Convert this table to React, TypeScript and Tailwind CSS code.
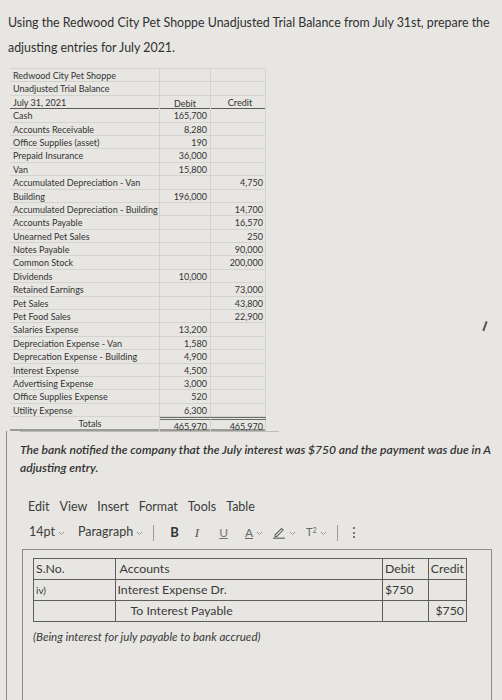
import React from "react";

type Row = { label: string; debit?: string; credit?: string; kind?: "title" | "head" | "total" };

const rows: Row[] = [
  { label: "Redwood City Pet Shoppe", kind: "title" },
  { label: "Unadjusted Trial Balance", kind: "title" },
  { label: "July 31, 2021", debit: "Debit", credit: "Credit", kind: "head" },
  { label: "Cash", debit: "165,700" },
  { label: "Accounts Receivable", debit: "8,280" },
  { label: "Office Supplies (asset)", debit: "190" },
  { label: "Prepaid Insurance", debit: "36,000" },
  { label: "Van", debit: "15,800" },
  { label: "Accumulated Depreciation - Van", credit: "4,750" },
  { label: "Building", debit: "196,000" },
  { label: "Accumulated Depreciation - Building", credit: "14,700" },
  { label: "Accounts Payable", credit: "16,570" },
  { label: "Unearned Pet Sales", credit: "250" },
  { label: "Notes Payable", credit: "90,000" },
  { label: "Common Stock", credit: "200,000" },
  { label: "Dividends", debit: "10,000" },
  { label: "Retained Earnings", credit: "73,000" },
  { label: "Pet Sales", credit: "43,800" },
  { label: "Pet Food Sales", credit: "22,900" },
  { label: "Salaries Expense", debit: "13,200" },
  { label: "Depreciation Expense - Van", debit: "1,580" },
  { label: "Deprecation Expense - Building", debit: "4,900" },
  { label: "Interest Expense", debit: "4,500" },
  { label: "Advertising Expense", debit: "3,000" },
  { label: "Office Supplies Expense", debit: "520" },
  { label: "Utility Expense", debit: "6,300" },
  { label: "Totals", debit: "465,970", credit: "465,970", kind: "total" },
];

function TrialBalance() {
  return (
    <div className="ml-[10px] mt-[8px] w-[256px] border-t border-r border-[#d4d4cf] font-['Lato'] text-[9px] text-[#333]">
      {rows.map((r, i) => {
        const head = r.kind === "head";
        const total = r.kind === "total";
        return (
          <div
            key={i}
            className={
              "grid grid-cols-[150px_51px_55px] h-[13.4px] leading-[13px] " +
              (head ? "border-b border-[#5a5a5a]" : total ? "border-b-2 border-[#9a9a96]" : "border-b border-[#d4d4cf]")
            }
          >
            <div className={"px-[3px] whitespace-nowrap overflow-hidden border-r border-[#d4d4cf] " + (total ? "text-center pl-[14px]" : "")}>
              {r.label}
            </div>
            <div
              className={
                "px-[3px] border-r border-[#d4d4cf] " +
                (head ? "text-center pt-[1px]" : "text-right") +
                (total ? " border-t-[3px] border-double border-t-[#6a6a6a]" : "")
              }
            >
              {r.debit}
            </div>
            <div
              className={
                "px-[3px] " +
                (head ? "text-center pl-[6px]" : "text-right") +
                (total ? " border-t-[3px] border-double border-t-[#6a6a6a]" : "")
              }
            >
              {r.credit}
            </div>
          </div>
        );
      })}
    </div>
  );
}

function Chevron() {
  return (
    <svg width="7" height="5" viewBox="0 0 7 5" className="ml-[3px] mt-[2px]">
      <path d="M1 1l2.5 2.5L6 1" stroke="#9a9a9a" strokeWidth="1" fill="none" />
    </svg>
  );
}

function Toolbar() {
  return (
    <div className="pl-[16px] pt-[21px] text-[#3c3c3c] font-['Lato']">
      <div className="flex gap-[10px] text-[12.5px] leading-[18px] pl-[5px]">
        <span>Edit</span>
        <span>View</span>
        <span>Insert</span>
        <span>Format</span>
        <span>Tools</span>
        <span>Table</span>
      </div>
      <div className="flex items-center h-[20px] mt-[7px] pl-[6px] text-[12.5px]">
        <span>14pt</span>
        <Chevron />
        <span className="ml-[13px]">Paragraph</span>
        <Chevron />
        <span className="ml-[10px] h-[16px] w-px bg-[#9a9a9a]" />
        <span className="ml-[16px] font-bold text-[13px] text-[#333]">B</span>
        <span className="ml-[16px] italic text-[13px] font-['Liberation_Serif'] text-[#555]">I</span>
        <span className="ml-[20px] underline text-[12px] text-[#777]">U</span>
        <span className="ml-[17px] underline text-[12px] text-[#666]">A</span>
        <Chevron />
        <svg width="14" height="13" viewBox="0 0 14 13" className="ml-[9px]">
          <path d="M3 9l6.5-6.5 1.6 1.6L4.6 10.6H3z" stroke="#666" strokeWidth="1.1" fill="none" />
          <path d="M1 12.2h12" stroke="#666" strokeWidth="1.2" />
        </svg>
        <Chevron />
        <span className="ml-[10px] text-[11px] text-[#666]">
          T<sup className="text-[7px]">2</sup>
        </span>
        <Chevron />
        <span className="ml-[10px] h-[16px] w-px bg-[#9a9a9a]" />
        <span className="ml-[15px] flex flex-col gap-[2.5px]">
          <span className="w-[2px] h-[2px] bg-[#777]" />
          <span className="w-[2px] h-[2px] bg-[#777]" />
          <span className="w-[2px] h-[2px] bg-[#777]" />
        </span>
      </div>
    </div>
  );
}

function Journal() {
  const cell = "border border-[#5e5e5e] px-[2px] h-[21px] leading-[20px] whitespace-nowrap";
  return (
    <div className="ml-[15px] mt-[6px] w-[470px] h-[200px] border-l border-t border-r border-[#8c8c88] pl-[10px] pt-[8px] font-['Lato']">
      <table className="border-collapse text-[12.3px] text-[#3a3a3a] w-[434px]">
        <tbody>
          <tr>
            <td className={cell + " w-[82px]"}>S.No.</td>
            <td className={cell + " w-[269px] pl-[4px]"}>Accounts</td>
            <td className={cell + " w-[46px]"}>Debit</td>
            <td className={cell + " w-[37px]"}>Credit</td>
          </tr>
          <tr>
            <td className={cell + " text-[10px]"}>iv)</td>
            <td className={cell}>Interest Expense Dr.</td>
            <td className={cell}>$750</td>
            <td className={cell}></td>
          </tr>
          <tr>
            <td className={cell}></td>
            <td className={cell + " pl-[15px]"}>To Interest Payable</td>
            <td className={cell}></td>
            <td className={cell + " text-right"}>$750</td>
          </tr>
        </tbody>
      </table>
      <p className="italic text-[11.6px] text-[#3a3a3a] mt-[6px]">(Being interest for july payable to bank accrued)</p>
    </div>
  );
}

export default function App() {
  return (
    <div className="w-[502px] h-[700px] overflow-hidden bg-[#e7e6e2] font-['Lato'] text-[#333] relative">
      <p className="px-[8px] pt-[10px] text-[12.4px] leading-[25px] text-[#303030]">
        Using the Redwood City Pet Shoppe Unadjusted Trial Balance from July 31st, prepare the adjusting entries for July 2021.
      </p>
      <TrialBalance />
      <span className="absolute left-[484px] top-[321px] w-[1.5px] h-[10px] bg-[#555] rotate-[20deg]" />
      <div className="ml-[6px] w-[486px] border-l border-[#8e8e8a] h-[275px] overflow-hidden">
        <div className="w-[259px] ml-[13px] border-t border-[#bdbdb8]" />
        <p className="pl-[13px] pt-[9px] italic font-semibold text-[12.1px] leading-[18px] text-[#333] whitespace-nowrap">
          The bank notified the company that the July interest was $750 and the payment was due in A
          <br />
          adjusting entry.
        </p>
        <Toolbar />
        <Journal />
      </div>
    </div>
  );
}
